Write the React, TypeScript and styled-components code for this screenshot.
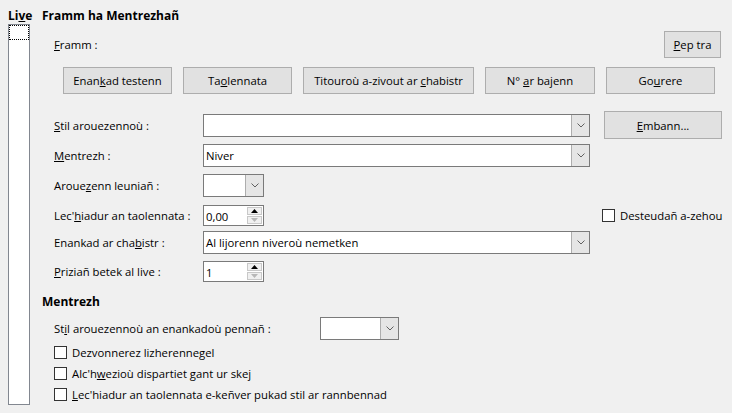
import React from "react";
import styled, { createGlobalStyle } from "styled-components";

const GlobalStyle = createGlobalStyle`
	html, body {
		margin: 0;
		padding: 0;
		background: #f0f0f0;
	}
	body {
		font-family: "Open Sans", "Noto Sans", sans-serif;
		font-size: 11.3px;
		color: #000;
	}
`;

const Page = styled.div`
	display: flex;
	gap: 12px;
	width: 732px;
	height: 413px;
	box-sizing: border-box;
	padding: 8px 10px 8px 8px;
`;

const LevelColumn = styled.div`
	display: flex;
	flex-direction: column;
	width: 22px;
`;

const Bold = styled.div`
	font-weight: bold;
	font-size: 12px;
	line-height: 16px;
	height: 16px;
	white-space: nowrap;
`;

const LevelList = styled.div`
	flex: 1;
	background: #fff;
	border: 1px solid #828790;
`;

const LevelItem = styled.div`
	height: 15px;
	border: 1px dotted #000;
	box-sizing: border-box;
`;

const Content = styled.div`
	display: flex;
	flex-direction: column;
	width: 680px;
`;

const U = styled.span`
	text-decoration: underline;
`;

const FrameRow = styled.div`
	display: flex;
	align-items: center;
	justify-content: space-between;
	margin-top: 7px;
	padding-left: 12px;
	padding-right: 1px;
`;

const PushButton = styled.button<{ $w: number; $h?: number }>`
	width: ${(p) => p.$w}px;
	height: ${(p) => p.$h ?? 27}px;
	box-sizing: border-box;
	background: #e1e1e1;
	border: 1px solid #adadad;
	border-radius: 0;
	padding: 0;
	font: inherit;
	color: #000;
	white-space: nowrap;
	align-self: center;
`;

const ButtonRow = styled.div`
	display: flex;
	gap: 11px;
	margin-top: 9px;
	padding-left: 21px;
`;

const FieldRow = styled.div<{ $h: number; $top: number; $cols?: string }>`
	display: grid;
	grid-template-columns: ${(p) => p.$cols ?? "135px 387px 118px"};
	column-gap: 14px;
	align-items: center;
	height: ${(p) => p.$h}px;
	margin-top: ${(p) => p.$top}px;
	padding-left: 12px;
`;

const Label = styled.span`
	white-space: nowrap;
`;

const ComboBox = styled.div<{ $w: number }>`
	display: flex;
	width: ${(p) => p.$w}px;
	height: 23px;
	box-sizing: border-box;
	background: #fff;
	border: 1px solid #7a7a7a;
`;

const FieldText = styled.span`
	flex: 1;
	padding-left: 2px;
	line-height: 21px;
	white-space: nowrap;
	overflow: hidden;
`;

const DropButton = styled.span`
	display: flex;
	align-items: center;
	justify-content: center;
	width: 17px;
	background: #e5e5e5;
	border-left: 1px solid #adadad;
`;

const SpinBox = styled.div`
	display: flex;
	width: 61px;
	height: 21px;
	box-sizing: border-box;
	background: #fff;
	border: 1px solid #7a7a7a;
`;

const SpinButtons = styled.div`
	display: flex;
	flex-direction: column;
	gap: 1px;
	width: 15px;
	padding: 1px 1px 1px 0;
`;

const SpinHalf = styled.span`
	flex: 1;
	display: flex;
	align-items: center;
	justify-content: center;
	background: #f0f0f0;
	border: 1px solid #c8c8c8;
`;

const CheckRow = styled.label<{ $top?: number }>`
	display: flex;
	align-items: center;
	gap: 5px;
	height: 23px;
	margin-top: ${(p) => p.$top ?? 0}px;
	padding-left: 12px;
	white-space: nowrap;
`;

const InlineCheck = styled(CheckRow)`
	padding-left: 0;
	margin-left: -2px;
`;

const Box = styled.span`
	flex-shrink: 0;
	width: 13px;
	height: 13px;
	box-sizing: border-box;
	background: #fff;
	border: 1px solid #333;
`;

const SectionGap = styled(Bold)<{ $top: number }>`
	margin-top: ${(p) => p.$top}px;
`;

const Chevron = () => (
	<svg width="8" height="5" viewBox="0 0 8 5">
		<polyline points="0.5,0.5 4,4 7.5,0.5" fill="none" stroke="#606060" strokeWidth="1" />
	</svg>
);

const Combo = ({ w, value }: { w: number; value?: string }) => (
	<ComboBox $w={w}>
		<FieldText>{value}</FieldText>
		<DropButton>
			<Chevron />
		</DropButton>
	</ComboBox>
);

const Spin = ({ value }: { value: string }) => (
	<SpinBox>
		<FieldText>{value}</FieldText>
		<SpinButtons>
			<SpinHalf>
				<svg width="7" height="4" viewBox="0 0 7 4">
					<polygon points="0,4 3.5,0 7,4" fill="#000" />
				</svg>
			</SpinHalf>
			<SpinHalf>
				<svg width="7" height="4" viewBox="0 0 7 4">
					<polygon points="0,0 3.5,4 7,0" fill="#b8b8b8" />
				</svg>
			</SpinHalf>
		</SpinButtons>
	</SpinBox>
);

const App = () => {
	return (
		<>
			<GlobalStyle />
			<Page>
				<LevelColumn>
					<Bold>
						Li<U>v</U>e
					</Bold>
					<LevelList>
						<LevelItem />
					</LevelList>
				</LevelColumn>

				<Content>
					<Bold>Framm ha Mentrezhañ</Bold>

					<FrameRow>
						<Label>
							<U>F</U>ramm :
						</Label>
						<PushButton $w={57}>
							<U>P</U>ep tra
						</PushButton>
					</FrameRow>

					<ButtonRow>
						<PushButton $w={109}>
							Enan<U>k</U>ad testenn
						</PushButton>
						<PushButton $w={109}>
							Ta<U>o</U>lennata
						</PushButton>
						<PushButton $w={171}>
							Titouroù a-zivout ar <U>c</U>habistr
						</PushButton>
						<PushButton $w={110}>
							N° <U>a</U>r bajenn
						</PushButton>
						<PushButton $w={109}>
							Go<U>u</U>rere
						</PushButton>
					</ButtonRow>

					<FieldRow $h={23} $top={17}>
						<Label>
							<U>S</U>til arouezennoù :
						</Label>
						<Combo w={387} />
						<PushButton $w={118} $h={28}>
							<U>E</U>mbann...
						</PushButton>
					</FieldRow>

					<FieldRow $h={23} $top={10}>
						<Label>
							<U>M</U>entrezh :
						</Label>
						<Combo w={387} value="Niver" />
					</FieldRow>

					<FieldRow $h={23} $top={7}>
						<Label>
							Aroue<U>z</U>enn leuniañ :
						</Label>
						<Combo w={61} />
					</FieldRow>

					<FieldRow $h={21} $top={7}>
						<Label>
							Lec'<U>h</U>iadur an taolennata :
						</Label>
						<Spin value="0,00" />
						<InlineCheck>
							<Box />
							<span>Desteudañ a-zehou</span>
						</InlineCheck>
					</FieldRow>

					<FieldRow $h={23} $top={6}>
						<Label>
							Enankad ar cha<U>b</U>istr :
						</Label>
						<Combo w={387} value="Al lijorenn niveroù nemetken" />
					</FieldRow>

					<FieldRow $h={21} $top={7}>
						<Label>
							<U>P</U>riziañ betek al live :
						</Label>
						<Spin value="1" />
					</FieldRow>

					<SectionGap $top={12}>Mentrezh</SectionGap>

					<FieldRow $h={23} $top={7} $cols="252px 79px">
						<Label>
							St<U>i</U>l arouezennoù an enankadoù pennañ :
						</Label>
						<Combo w={79} />
					</FieldRow>

					<CheckRow $top={2}>
						<Box />
						<span>
							Dezvonnerez lizherenne<U>g</U>el
						</span>
					</CheckRow>
					<CheckRow>
						<Box />
						<span>
							Alc'h<U>w</U>ezioù dispartiet gant ur skej
						</span>
					</CheckRow>
					<CheckRow>
						<Box />
						<span>
							<U>L</U>ec'hiadur an taolennata e-keñver pukad stil ar rannbennad
						</span>
					</CheckRow>
				</Content>
			</Page>
		</>
	);
};

export default App;
